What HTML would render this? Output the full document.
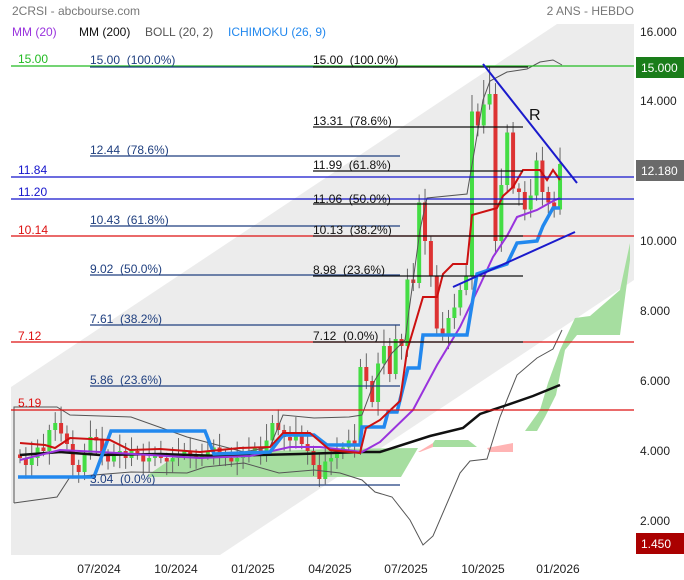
<!DOCTYPE html>
<html><head><meta charset="utf-8"><style>
html,body{margin:0;padding:0;background:#fff;width:684px;height:580px;overflow:hidden}
svg{display:block;font-family:"Liberation Sans",sans-serif}
</style></head><body>
<svg id="s" width="684" height="580" viewBox="0 0 684 580" xmlns="http://www.w3.org/2000/svg">
<rect width="684" height="580" fill="#fff"/>
<polygon points="11,387 11,555 220,555 634,280 634,24 557,24" fill="#ececec"/>
<polygon points="148,475 174,457 244,452 331,449 418,448 401,477 148,477" fill="#a6dea0"/>
<polygon points="433,443 435,440 468,440 477,447 433,447" fill="#a6dea0"/>
<polygon points="418,452 433,443 433,447 420,452" fill="#ffb4b4"/>
<polygon points="487,448 513,443 513,452 490,452" fill="#ffb4b4"/>
<polygon points="525,431 540,410 548,383 560,350 575,318 590,316 620,290 630,243 630,260 620,335 590,335 577,335 565,350 556,395 545,417 537,431" fill="#a6dea0"/>
<g id="cd"></g>
<polyline fill="none" stroke="#555" stroke-width="1" points="14,503 14,407 57,407 70,415 131,417 187,437 244,452 270,447 283,415 314,418 349,417 362,415 375,380 392,353 405,340 420,230 427,198 467,194 473,159 483,100 490,81 507,72 527,69 540,62 553,60 562,65"/>
<polyline fill="none" stroke="#555" stroke-width="1" points="14,503 57,497 70,477 131,472 187,473 205,467 244,463 279,473 314,470 340,473 362,480 375,492 392,497 410,520 423,545 433,536 460,473 470,461 487,459 500,417 517,375 537,358 553,349 562,330"/>
<polyline fill="none" stroke="#111" stroke-width="2.5" points="20,455 60,452 100,455 160,454 220,456 300,454 362,452 380,452 430,436 463,428 480,414 507,405 533,396 560,385"/>
<polyline fill="none" stroke="#9933dd" stroke-width="2" points="20,460 60,450 100,452 150,455 200,458 250,456 290,447 320,447 362,452 380,442 413,410 437,365 460,327 480,285 493,257 507,236 517,217 537,210 553,201 560,198"/>
<polyline fill="none" stroke="#2288ee" stroke-width="3.5" points="18,477 94,477 111,431 205,431 214,454 270,452 283,435 314,435 327,445 360,445 362,427 384,427 388,412 397,412 408,368 419,368 423,335 467,335 477,274 507,264 517,243 537,241 543,226 553,208 560,208"/>
<polyline fill="none" stroke="#cc1111" stroke-width="2" points="20,443 45,445 55,448 70,438 110,440 130,450 160,449 200,452 240,448 270,447 283,433 310,433 330,450 360,453 366,428 380,420 400,401 407,351 423,297 437,297 443,274 453,264 467,264 472,215 497,208 503,196 513,187 523,170 540,170 547,180 553,170 560,180"/>
<line x1="11" y1="66" x2="634" y2="66" stroke="#22bb22" stroke-width="1.3"/>
<line x1="11" y1="177" x2="634" y2="177" stroke="#1414cc" stroke-width="1.3"/>
<line x1="11" y1="199" x2="634" y2="199" stroke="#1414cc" stroke-width="1.3"/>
<line x1="11" y1="236" x2="634" y2="236" stroke="#dd1111" stroke-width="1.3"/>
<line x1="11" y1="342" x2="634" y2="342" stroke="#dd1111" stroke-width="1.3"/>
<line x1="11" y1="410" x2="634" y2="410" stroke="#dd1111" stroke-width="1.3"/>
<g stroke="#1f3f7f" stroke-width="1.2">
<line x1="90" y1="67" x2="400" y2="67"/><line x1="90" y1="156" x2="400" y2="156"/><line x1="90" y1="226" x2="400" y2="226"/><line x1="90" y1="275" x2="400" y2="275"/><line x1="90" y1="325" x2="400" y2="325"/><line x1="90" y1="386" x2="400" y2="386"/><line x1="90" y1="485" x2="400" y2="485"/>
</g>
<g stroke="#111" stroke-width="1.2">
<line x1="313" y1="67" x2="528" y2="67"/><line x1="313" y1="127" x2="523" y2="127"/><line x1="313" y1="171" x2="523" y2="171"/><line x1="313" y1="204" x2="523" y2="204"/><line x1="313" y1="236" x2="523" y2="236"/><line x1="313" y1="276" x2="523" y2="276"/><line x1="313" y1="342" x2="523" y2="342"/>
</g>
<g font-size="12" fill="#1f3f7f">
<text x="90" y="64">15.00&#160; (100.0%)</text><text x="90" y="154">12.44&#160; (78.6%)</text><text x="90" y="224">10.43&#160; (61.8%)</text><text x="90" y="273">9.02&#160; (50.0%)</text><text x="90" y="323">7.61&#160; (38.2%)</text><text x="90" y="384">5.86&#160; (23.6%)</text><text x="90" y="483">3.04&#160; (0.0%)</text>
</g>
<g font-size="12" fill="#111">
<text x="313" y="64">15.00&#160; (100.0%)</text><text x="313" y="125">13.31&#160; (78.6%)</text><text x="313" y="169">11.99&#160; (61.8%)</text><text x="313" y="203">11.06&#160; (50.0%)</text><text x="313" y="234">10.13&#160; (38.2%)</text><text x="313" y="274">8.98&#160; (23.6%)</text><text x="313" y="340">7.12&#160; (0.0%)</text>
</g>
<g font-size="12">
<text x="18" y="63" fill="#22bb22">15.00</text><text x="18" y="174" fill="#1414cc">11.84</text><text x="18" y="196" fill="#1414cc">11.20</text><text x="18" y="234" fill="#dd1111">10.14</text><text x="18" y="340" fill="#dd1111">7.12</text><text x="18" y="407" fill="#dd1111">5.19</text>
</g>
<line x1="483" y1="64" x2="577" y2="183" stroke="#1a1acc" stroke-width="2"/>
<line x1="453" y1="287" x2="575" y2="232" stroke="#1a1acc" stroke-width="2"/>
<text x="529" y="120" font-size="16" fill="#111">R</text>
<text x="12" y="15" font-size="12" fill="#777">2CRSI - abcbourse.com</text>
<text x="634" y="15" font-size="12" fill="#777" text-anchor="end">2 ANS - HEBDO</text>
<g font-size="12"><text x="12" y="36" fill="#9933dd">MM (20)</text><text x="79" y="36" fill="#111">MM (200)</text><text x="145" y="36" fill="#555">BOLL (20, 2)</text><text x="228" y="36" fill="#2288ee">ICHIMOKU (26, 9)</text></g>
<g font-size="12" fill="#222">
<text x="640" y="36">16.000</text><text x="640" y="105">14.000</text><text x="640" y="245">10.000</text><text x="640" y="315">8.000</text><text x="640" y="385">6.000</text><text x="640" y="455">4.000</text><text x="640" y="525">2.000</text>
</g>
<rect x="636" y="57" width="48" height="21" fill="#1a7d1a"/><text x="641" y="72" font-size="12" fill="#fff">15.000</text>
<rect x="636" y="160" width="48" height="21" fill="#6a6a6a"/><text x="641" y="175" font-size="12" fill="#fff">12.180</text>
<rect x="636" y="533" width="48" height="21" fill="#aa0000"/><text x="641" y="548" font-size="12" fill="#fff">1.450</text>
<g font-size="12" fill="#222" text-anchor="middle">
<text x="99" y="573">07/2024</text><text x="176" y="573">10/2024</text><text x="253" y="573">01/2025</text><text x="330" y="573">04/2025</text><text x="406" y="573">07/2025</text><text x="483" y="573">10/2025</text><text x="558" y="573">01/2026</text>
</g>
</svg>
<script>
var c=[3.8,3.6,3.8,4.1,4.0,4.6,4.8,4.5,4.2,3.6,3.4,3.9,4.4,4.3,3.9,3.7,3.9,4.0,3.8,4.0,3.9,3.7,3.8,3.9,3.8,3.7,3.8,3.9,4.0,3.9,3.8,3.9,4.0,4.1,3.9,3.8,3.7,3.8,3.9,4.0,4.1,4.0,4.3,4.8,4.6,4.4,4.3,4.5,4.2,4.0,3.6,3.2,3.7,3.8,4.0,4.1,4.3,
4.2,6.4,6.0,5.4,6.5,7.0,6.2,7.2,7.0,8.9,8.8,11.1,10.0,9.0,7.5,7.3,7.8,8.1,8.6,9.0,13.7,13.3,13.9,14.2,10.0,11.6,13.1,11.5,11.4,10.9,11.3,12.3,11.4,11.1,10.9,12.2];
function Y(p){return 31+(16-p)*35;}
var g=document.getElementById('cd'),h='',o=3.9;
for(var i=0;i<c.length;i++){var x=20+i*5.87,cl=c[i],hi=Math.max(o,cl)+0.15+((i*7)%5)*0.08,lo=Math.min(o,cl)-0.15-((i*3)%4)*0.08;
if(i==80)hi=15.0;if(i==84)hi=13.4;if(i==79)hi=14.6;
var up=cl>=o,t=Y(Math.max(o,cl)),b=Y(Math.min(o,cl));if(b-t<1.5)b=t+1.5;
h+='<line x1="'+x+'" x2="'+x+'" y1="'+Y(hi)+'" y2="'+Y(lo)+'" stroke="#666" stroke-width="1"/>';
h+='<rect x="'+(x-2)+'" y="'+t+'" width="4" height="'+(b-t)+'" fill="'+(up?'#44dd44':'#dd3333')+'"/>';o=cl;}
g.innerHTML=h;
</script>
</body></html>
